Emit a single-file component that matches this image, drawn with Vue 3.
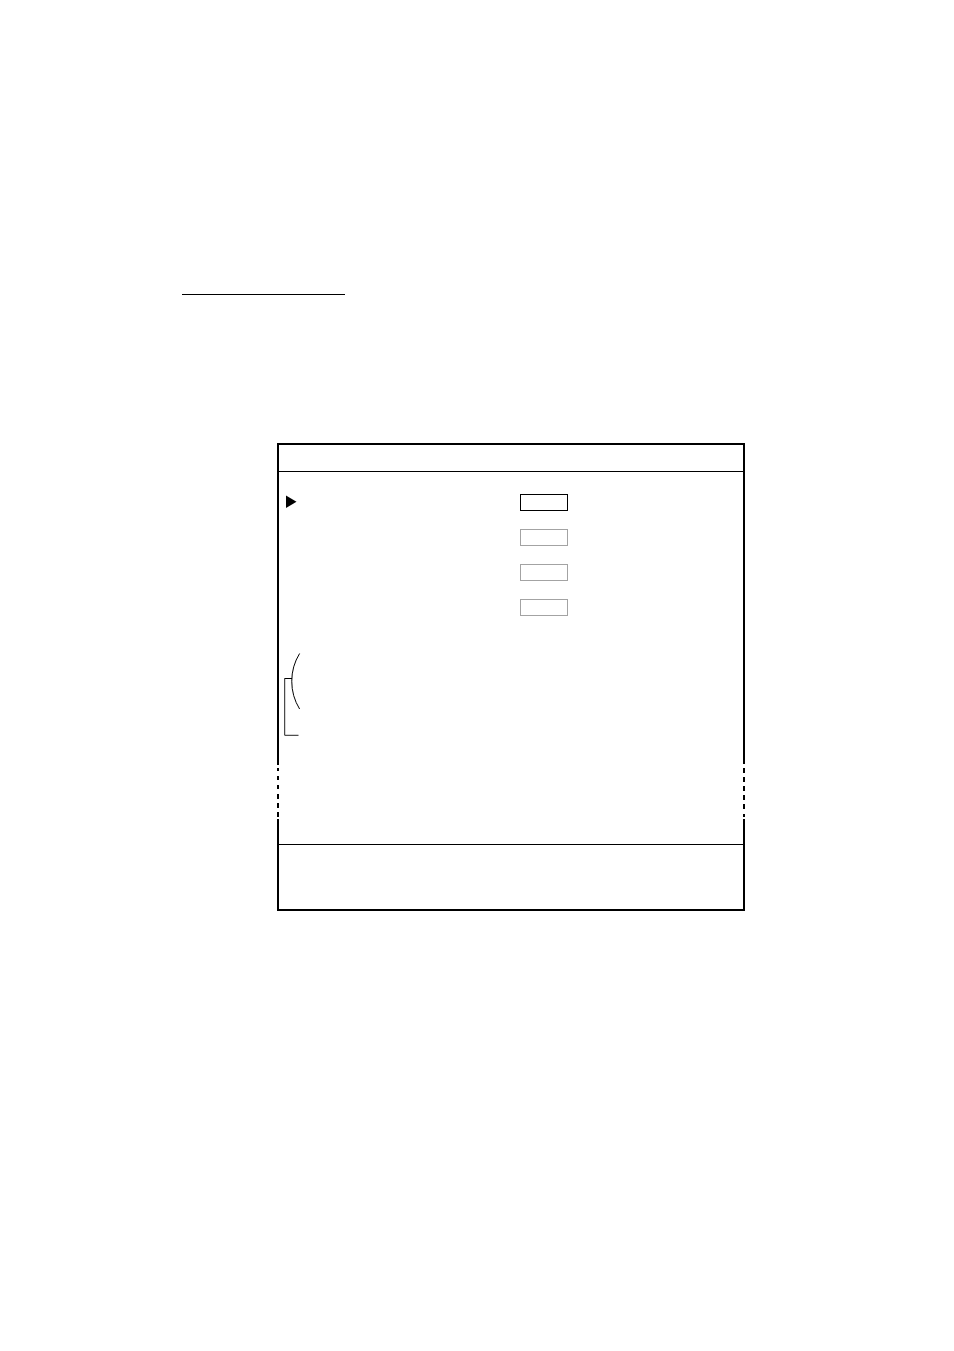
<template>
	<main class="page">
		<hr class="heading-rule" />

		<form class="menu" @submit.prevent>
			<header class="menu-header"></header>

			<div class="menu-body">
				<div class="rows">
					<div v-for="(row, index) in rows" :key="row.id" class="row">
						<label class="row-label" :for="row.id">
							<svg v-if="index === selected" class="marker" width="11" height="13" viewBox="0 0 11 13">
								<path d="M0 -0.5 L10.5 5.7 L0 12 Z" />
							</svg>
						</label>
						<input
							:id="row.id"
							v-model="row.value"
							type="text"
							class="field"
							:class="{ active: index === selected }"
							@focus="selected = index"
						/>
					</div>
				</div>

				<!-- Bracket joining the group to the line below it -->
				<svg class="bracket" width="17" height="83" viewBox="0 0 17 83">
					<path d="M15.6 0.5 A53 53 0 0 0 15.6 56" />
					<path d="M0.5 25.5 H8" />
					<path class="thin" d="M0.7 25.5 V82.3 H14.5" />
				</svg>
			</div>

			<!-- Broken part of the frame -->
			<div class="menu-break">
				<svg width="2" height="55" viewBox="0 0 2 55">
					<path d="M1 0 V1 M1 4 V7 M1 12 V16 M1 21 V25 M1 30 V35 M1 39 V44 M1 48 V53" />
				</svg>
				<svg width="2" height="55" viewBox="0 0 2 55">
					<path d="M1 4 V9 M1 13 V18 M1 22 V27 M1 31 V36 M1 40 V45 M1 50 V53" />
				</svg>
			</div>

			<div class="menu-end"></div>
			<footer class="menu-footer"></footer>
		</form>
	</main>
</template>

<script setup>
	import { ref } from 'vue';

	const selected = ref(0);

	const rows = ref([
		{ id: 'field-1', value: '' },
		{ id: 'field-2', value: '' },
		{ id: 'field-3', value: '' },
		{ id: 'field-4', value: '' },
	]);
</script>

<style>
	body {
		margin: 0;
		background-color: #fff;
	}
</style>

<style scoped>
	.page {
		box-sizing: border-box;
		min-height: 100vh;
		padding: 294px 209px 60px 182px;
		font-family: "Liberation Sans", Arial, sans-serif;
		font-size: 12px;
		color: #000;
	}

	.heading-rule {
		width: 163px;
		height: 1px;
		margin: 0;
		border: none;
		background-color: #000;
	}

	.menu {
		margin: 148px 0 0 95px;
	}

	.menu-header {
		box-sizing: border-box;
		height: 29px;
		border: 2px solid #000;
		border-bottom-width: 1px;
	}

	.menu-body {
		padding: 22px 0 28px 5px;
		border: solid #000;
		border-width: 0 2px;
	}

	.rows {
		display: flex;
		flex-direction: column;
		gap: 18px;
		padding-left: 2px;
	}

	.row {
		display: grid;
		grid-template-columns: 234px 48px;
		height: 17px;
	}

	.row-label {
		display: flex;
		align-items: center;
	}

	.marker {
		display: block;
		overflow: visible;
		fill: #000;
	}

	.field {
		box-sizing: border-box;
		width: 100%;
		height: 17px;
		padding: 0 4px;
		border: 1px solid #a3a3a3;
		border-radius: 0;
		outline: none;
		background-color: #fff;
		font: inherit;
	}

	.field.active {
		border-color: #000;
	}

	.bracket {
		display: block;
		margin-top: 37px;
		fill: none;
		stroke: #000;
		stroke-width: 1;
	}

	.bracket .thin {
		stroke: #222;
	}

	.menu-break {
		display: flex;
		justify-content: space-between;
	}

	.menu-break svg {
		display: block;
		stroke: #000;
		stroke-width: 2;
	}

	.menu-end {
		height: 25px;
		border: solid #000;
		border-width: 0 2px;
	}

	.menu-footer {
		height: 64px;
		border: 2px solid #000;
		border-top-width: 1px;
	}
</style>
